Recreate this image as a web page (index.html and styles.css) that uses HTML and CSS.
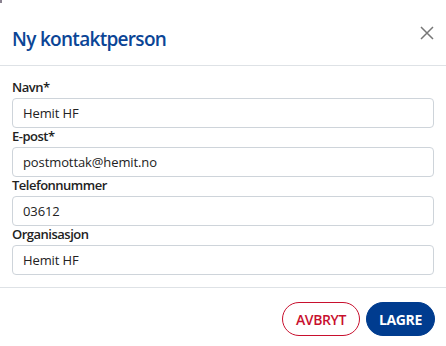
FILE: index.html
```html
<!DOCTYPE html>
<html lang="no">
<head>
    <meta charset="UTF-8">
    <meta name="viewport" content="width=device-width, initial-scale=1.0">
    <title>Ny kontaktperson</title>
    <link rel="stylesheet" href="styles.css">
</head>
<body>
    <span class="corner"></span>
    <div class="modal">
        <div class="modal-header">
            <h2>Ny kontaktperson</h2>
            <button class="close" aria-label="Lukk">
                <svg width="14" height="14" viewBox="0 0 14 14">
                    <path d="M1 1 L13 13 M13 1 L1 13" stroke="#777" stroke-width="1.5" fill="none"/>
                </svg>
            </button>
        </div>
        <form class="modal-body">
            <label class="field">
                <span class="label">Navn*</span>
                <input type="text" value="Hemit HF">
            </label>
            <label class="field">
                <span class="label">E-post*</span>
                <input type="text" value="postmottak@hemit.no">
            </label>
            <label class="field">
                <span class="label">Telefonnummer</span>
                <input type="text" value="03612">
            </label>
            <label class="field">
                <span class="label">Organisasjon</span>
                <input type="text" value="Hemit HF">
            </label>
        </form>
        <div class="modal-footer">
            <button class="btn btn-cancel">Avbryt</button>
            <button class="btn btn-save">Lagre</button>
        </div>
    </div>
</body>
</html>
```

FILE: styles.css
```css
* {
    margin: 0;
    padding: 0;
    box-sizing: border-box;
}

body {
    font-family: 'Open Sans', 'Noto Sans', sans-serif;
    background: #fff;
    color: #222;
}

.corner {
    position: absolute;
    top: 0;
    left: 0;
    width: 2px;
    height: 3px;
    background: #8a8290;
}

.modal {
    width: 446px;
}

.modal-header {
    height: 66px;
    border-bottom: 1px solid #dee2e6;
    display: flex;
    justify-content: space-between;
    align-items: flex-start;
    padding: 0 11px 0 12px;
}

.modal-header h2 {
    font-size: 19px;
    font-weight: 600;
    color: #0b4596;
    line-height: 24px;
    letter-spacing: -0.7px;
    margin-top: 27px;
}

.close {
    background: none;
    border: none;
    cursor: pointer;
    margin-top: 25px;
    width: 16px;
    height: 16px;
    display: flex;
    align-items: center;
    justify-content: center;
}

.modal-body {
    padding: 13px 12px 12px;
    display: flex;
    flex-direction: column;
}

.field {
    display: flex;
    flex-direction: column;
}

.label {
    font-size: 13px;
    font-weight: 600;
    line-height: 17px;
    letter-spacing: -0.5px;
    margin-bottom: 2px;
}

.field input {
    height: 30px;
    border: 1px solid #ced4da;
    border-radius: 4px;
    padding: 0 10px;
    font-family: inherit;
    font-size: 13px;
    letter-spacing: -0.1px;
    color: #222;
}

.modal-footer {
    border-top: 1px solid #dee2e6;
    display: flex;
    justify-content: flex-end;
    gap: 6px;
    padding: 14px 11px;
}

.btn {
    height: 34px;
    border-radius: 17px;
    font-family: inherit;
    font-size: 14px;
    font-weight: 600;
    letter-spacing: -0.4px;
    text-transform: uppercase;
    cursor: pointer;
}

.btn-cancel {
    width: 78px;
    background: #fff;
    border: 1px solid #c8102e;
    color: #c8102e;
}

.btn-save {
    width: 69px;
    background: #003c8f;
    border: 1px solid #003c8f;
    color: #fff;
    font-weight: 700;
}
```
